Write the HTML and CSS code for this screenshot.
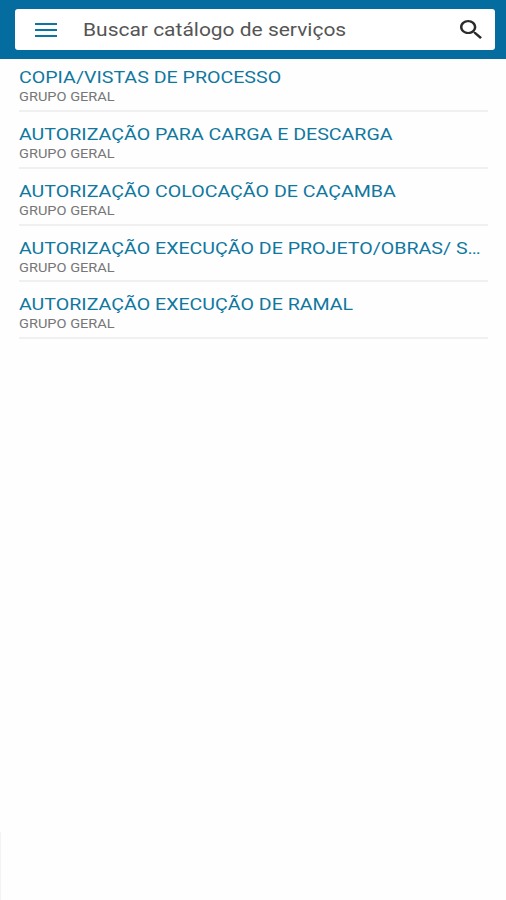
FILE: index.html
```html
<!DOCTYPE html>
<html lang="pt-BR">
<head>
<meta charset="utf-8">
<title>Catálogo de serviços</title>
<link rel="stylesheet" href="styles.css">
</head>
<body>
<header class="topbar">
  <div class="search">
    <svg class="menu" viewBox="0 0 22 14"><path d="M0 1h22M0 7h22M0 13h22"/></svg>
    <span class="placeholder"><span class="wide">Buscar catálogo de serviços</span></span>
    <svg class="lens" viewBox="3 3 17.5 17.5" preserveAspectRatio="none"><path d="M15.5 14h-.79l-.28-.27C15.41 12.59 16 11.11 16 9.5 16 5.91 13.09 3 9.5 3S3 5.91 3 9.5 5.91 16 9.5 16c1.61 0 3.09-.59 4.23-1.57l.27.28v.79l5 4.99L20.49 19l-4.99-5zm-6 0C7.01 14 5 11.99 5 9.5S7.01 5 9.5 5 14 7.01 14 9.5 11.99 14 9.5 14z"/></svg>
  </div>
</header>
<main class="list">
  <div class="item"><div class="name"><span class="wide">COPIA/VISTAS DE PROCESSO</span></div><div class="group"><span class="wide">GRUPO GERAL</span></div></div>
  <div class="item"><div class="name"><span class="wide">AUTORIZAÇÃO PARA CARGA E DESCARGA</span></div><div class="group"><span class="wide">GRUPO GERAL</span></div></div>
  <div class="item"><div class="name"><span class="wide">AUTORIZAÇÃO COLOCAÇÃO DE CAÇAMBA</span></div><div class="group"><span class="wide">GRUPO GERAL</span></div></div>
  <div class="item"><div class="name"><span class="wide">AUTORIZAÇÃO EXECUÇÃO DE PROJETO/OBRAS/ S…</span></div><div class="group"><span class="wide">GRUPO GERAL</span></div></div>
  <div class="item"><div class="name"><span class="wide">AUTORIZAÇÃO EXECUÇÃO DE RAMAL</span></div><div class="group"><span class="wide">GRUPO GERAL</span></div></div>
</main>
<div class="edge"></div>
</body>
</html>
```
FILE: styles.css
```css
* { box-sizing: border-box; }
body {
  display: flex;
  flex-direction: column;
  margin: 0;
  height: 900px;
  background: #fefefe;
  font-family: Roboto, "Liberation Sans", sans-serif;
}
.topbar {
  height: 59px;
  padding: 9px 11px 0 15px;
  background: #056c9f;
}
.search {
  display: flex;
  align-items: center;
  height: 41px;
  padding: 0 13px 0 20px;
  background: #fff;
  border-radius: 3px;
}
.menu {
  width: 22px;
  height: 14px;
  fill: none;
  stroke: #0b75a5;
  stroke-width: 2;
}
.placeholder {
  flex: 1;
  margin-left: 26px;
  font-size: 18px;
  line-height: 24px;
  color: #555;
  white-space: nowrap;
}
.lens {
  width: 22px;
  height: 19px;
  fill: #2b2b2b;
}
.wide {
  display: inline-block;
  transform: scaleX(1.165);
  transform-origin: 0 50%;
}
.name .wide {
  transform: scaleX(1.153);
}
.list {
  padding: 0 18px 0 19px;
}
.item {
  height: 56.75px;
  padding-top: 11px;
  border-bottom: 2px solid #f0f0f0;
  white-space: nowrap;
}
.item:first-child {
  height: 53px;
  padding-top: 7px;
}
.name {
  height: 22px;
  font-size: 17px;
  line-height: 22px;
  color: #10789f;
}
.group {
  height: 18px;
  font-size: 12.5px;
  line-height: 18px;
  color: #777;
}
.edge {
  width: 1px;
  height: 68px;
  margin-top: auto;
  background: #f3f3f3;
}
```
